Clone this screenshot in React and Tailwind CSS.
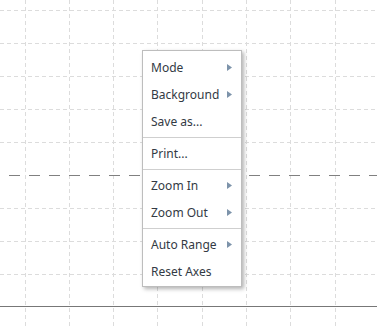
const ITEMS = [
  { label: 'Mode', sub: true },
  { label: 'Background', sub: true },
  { label: 'Save as...' },
  { sep: true },
  { label: 'Print...' },
  { sep: true },
  { label: 'Zoom In', sub: true },
  { label: 'Zoom Out', sub: true },
  { sep: true },
  { label: 'Auto Range', sub: true },
  { label: 'Reset Axes' },
]

function Grid() {
  const xs = Array.from({ length: 9 }, (_, i) => 24.5 + i * 44.33)
  const ys = [10, 43, 76, 109, 142, 208, 241, 274]
  return (
    <svg width="377" height="326" className="block">
      {xs.map((x) => (
        <line key={x} x1={Math.round(x) + 0.5} y1="0" x2={Math.round(x) + 0.5} y2="326" stroke="#dcdcdc" strokeDasharray="4 3" />
      ))}
      {ys.map((y) => (
        <line key={y} x1="0" y1={y + 0.5} x2="377" y2={y + 0.5} stroke="#dcdcdc" strokeDasharray="4 3" />
      ))}
      <line x1="9" y1="175.5" x2="377" y2="175.5" stroke="#808080" strokeDasharray="11 9" />
      <line x1="0" y1="306.5" x2="377" y2="306.5" stroke="#777" />
    </svg>
  )
}

function Arrow() {
  return (
    <svg width="5" height="7" viewBox="0 0 5 7" className="shrink-0">
      <path d="M0 0 L5 3.5 L0 7 Z" fill="#7d93aa" />
    </svg>
  )
}

export default function App() {
  return (
    <div className="relative h-[326px] w-[377px] overflow-hidden bg-white font-['Noto_Sans',sans-serif]">
      <Grid />
      <div className="absolute left-[142px] top-[50px] w-[100px] border border-[#bdbdbd] bg-white pt-[3px] pb-[1px] shadow-[2px_2px_4px_rgba(0,0,0,0.3)]">
        {ITEMS.map((item, i) =>
          item.sep ? (
            <div key={i} className="my-[2px] h-px bg-[#cfcfcf]" />
          ) : (
            <div key={i} className="flex h-[27px] items-center justify-between pl-2 pr-[9px] text-[12px] text-[#333a44]">
              <span>{item.label}</span>
              {item.sub && <Arrow />}
            </div>
          )
        )}
      </div>
    </div>
  )
}
